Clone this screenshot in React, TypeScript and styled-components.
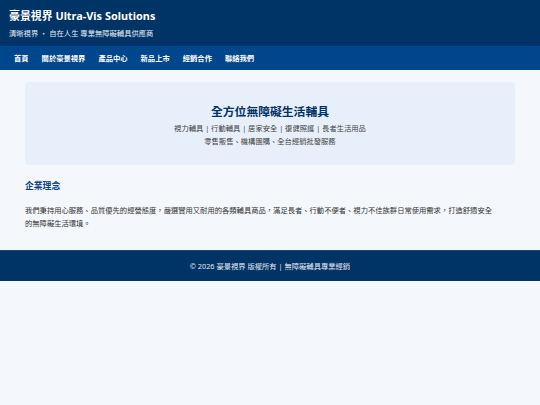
import React from 'react';
import styled, { createGlobalStyle } from 'styled-components';

const COLORS = {
  navy: '#003366',
  navBlue: '#00468c',
  heading: '#0a4380',
  page: '#f4f7fb',
  card: '#e7effa',
  text: '#333333',
};

const FONT = `"Noto Sans", "Noto Sans CJK TC", sans-serif`;

const GlobalStyle = createGlobalStyle`
  html, body {
    margin: 0;
    padding: 0;
    background: ${COLORS.page};
    font-family: ${FONT};
  }
  * {
    box-sizing: border-box;
  }
`;

const Header = styled.header`
  background: ${COLORS.navy};
  color: #ffffff;
  padding: 7px 9px 7px;
  height: 46px;
  .title {
    margin: 0;
    font-size: 10.9px;
    line-height: 17px;
    font-weight: 700;
  }
  .slogan {
    margin: 3px 0 0;
    font-size: 7.3px;
    line-height: 12px;
    color: #e6edf5;
  }
`;

const Nav = styled.nav`
  background: ${COLORS.navBlue};
  height: 24px;
  display: flex;
  flex-direction: row;
  align-items: center;
  padding: 0 7.5px;
`;

const NavItem = styled.a`
  color: #ffffff;
  font-size: 7.3px;
  font-weight: 700;
  padding: 0 6.5px;
  text-decoration: none;
`;

const Main = styled.main`
  padding: 12px 25px 20px;
`;

const Banner = styled.section`
  background: ${COLORS.card};
  border-radius: 4px;
  padding: 21px 20px 17px;
  text-align: center;
  h2 {
    margin: 0 0 2px;
    font-size: 11.8px;
    line-height: 17px;
    font-weight: 700;
    color: ${COLORS.navy};
  }
  p {
    margin: 0;
    font-size: 7.3px;
    line-height: 13px;
    color: #444444;
  }
`;

const Section = styled.section`
  margin-top: 14px;
  h3 {
    margin: 0;
    font-size: 8.8px;
    line-height: 14px;
    font-weight: 700;
    color: ${COLORS.heading};
  }
  p {
    margin: 11px 0 0;
    font-size: 7.3px;
    line-height: 13px;
    color: ${COLORS.text};
    padding-right: 16px;
  }
`;

const Footer = styled.footer`
  background: ${COLORS.navy};
  border-top: 1px solid #1d4c7c;
  height: 31px;
  display: flex;
  align-items: center;
  justify-content: center;
  color: #e3eaf2;
  font-size: 7.3px;
`;

const NAV_ITEMS = ['首頁', '關於豪景視界', '產品中心', '新品上市', '經銷合作', '聯絡我們'];

const App = () => {
  return (
    <>
      <GlobalStyle />
      <Header>
        <p className='title'>豪景視界 Ultra-Vis Solutions</p>
        <p className='slogan'>清晰視界 ・ 自在人生 專業無障礙輔具供應商</p>
      </Header>
      <Nav>
        {NAV_ITEMS.map((item) => (
          <NavItem key={item} href='#'>
            {item}
          </NavItem>
        ))}
      </Nav>
      <Main>
        <Banner>
          <h2>全方位無障礙生活輔具</h2>
          <p>視力輔具 | 行動輔具 | 居家安全 | 復健照護 | 長者生活用品</p>
          <p>零售販售、機構團購、全台經銷批發服務</p>
        </Banner>
        <Section>
          <h3>企業理念</h3>
          <p>
            我們秉持用心服務、品質優先的經營態度，嚴選實用又耐用的各類輔具商品，滿足長者、行動不便者、視力不佳族群日常使用需求，打造舒適安全的無障礙生活環境。
          </p>
        </Section>
      </Main>
      <Footer>© 2026 豪景視界 版權所有 | 無障礙輔具專業經銷</Footer>
    </>
  );
};

export default App;
